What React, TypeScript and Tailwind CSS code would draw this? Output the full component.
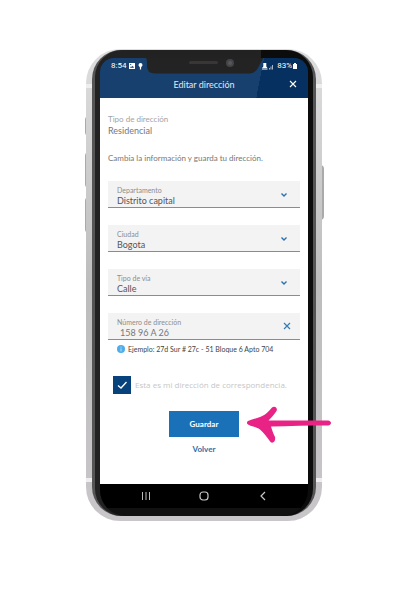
import type { ReactNode } from 'react';

function Chevron() {
  return (
    <svg className="pointer-events-none absolute right-3 top-2.5 h-2 w-2" viewBox="0 0 8 8" fill="none" stroke="#2a72b0" strokeWidth="1.4" aria-hidden="true">
      <path d="M1.5 2.5 4 5l2.500-2.500" />
    </svg>
  );
}

function Field({ id, label, children }: { id: string; label: string; children: ReactNode }) {
  return (
    <div className="relative h-[27px] border-b border-[#8c8c8c] bg-[#f3f3f3] px-2 pt-1">
      <label htmlFor={id} className="block pl-px text-[7px] leading-[10px] text-[#8d8d8d]">{label}</label>
      {children}
    </div>
  );
}

function SelectField({ id, label, value }: { id: string; label: string; value: string }) {
  return (
    <Field id={id} label={label}>
      <select id={id} defaultValue={value} className="block h-3 w-full appearance-none bg-transparent py-0 pl-px pr-0 text-[9px] leading-3 text-[#555] outline-none">
        <option>{value}</option>
      </select>
      <Chevron />
    </Field>
  );
}

function StatusBar() {
  return (
    <div className="flex h-4 items-center justify-between pl-[11px] pr-2.5 font-['Roboto',sans-serif] text-[8px] leading-3 text-white">
      <span className="flex items-center gap-[3px]">
        8:54
        <svg className="h-2 w-4" viewBox="0 0 16 8" fill="white" aria-hidden="true">
          <path fillRule="evenodd" d="M0 1h6v6H0zM1 5.800h4L3.700 3.800 2.700 5 2 4.300zM1.200 2v1h1V2z" />
          <path d="M9.500 3a2 2 0 1 1 4 0c0 1-1 1.500-1.400 2.400V7.500h-1.200V5.400C10.500 4.500 9.500 4 9.500 3z" />
        </svg>
      </span>
      <span className="flex items-center">
        <svg className="mr-[3px] h-2 w-3" viewBox="0 0 12 8" fill="white" aria-hidden="true">
          <path d="M1.300 1h3v3.500L5.500 6H0l1.300-1.500zM0 6.500h5.500v1H0z" />
          <path d="M7 6h1v1.500H7zM8.500 4.500h1v3h-1zM10 3h1v4.500h-1z" opacity=".65" />
        </svg>
        83%
        <svg className="h-2 w-1.5" viewBox="0 0 6 8" fill="white" aria-hidden="true">
          <path d="M1 2h1V1h2v1h1v5H1z" />
        </svg>
      </span>
    </div>
  );
}

function Notch() {
  return (
    <svg className="absolute left-[46px] top-0 h-4 w-[120px]" viewBox="0 0 120 16" aria-hidden="true">
      <path d="M-1-1Q1 0 1 5V8Q1 15.500 9 15.500H104Q110 15 113 8L118-1Z" fill="#232323" />
      <rect x="43" y="3" width="29" height="3" rx="1.500" fill="#3a3636" />
      <circle cx="84" cy="5" r="4" fill="#464448" />
      <circle cx="84" cy="5" r="2" fill="#59575b" />
    </svg>
  );
}

function AddressForm() {
  return (
    <form className="flex h-[386px] flex-col bg-white px-2 pt-4" onSubmit={(e) => e.preventDefault()}>
      <p className="text-[8px] leading-[11px] text-[#a3a3a3]">Tipo de dirección</p>
      <p className="text-[9px] leading-[11px] text-[#777]">Residencial</p>
      <p className="mt-[17px] whitespace-nowrap text-[8px] leading-[11px] text-[#777]">Cambia la información y guarda tu dirección.</p>
      <div className="mt-[17px] flex flex-col gap-[17px]">
        <SelectField id="departamento" label="Departamento" value="Distrito capital" />
        <SelectField id="ciudad" label="Ciudad" value="Bogota" />
        <SelectField id="via" label="Tipo de vía" value="Calle" />
        <Field id="numero" label="Número de dirección">
          <input id="numero" defaultValue="158 96 A 26" className="block h-3 w-full bg-transparent pl-1 text-[9px] leading-3 text-[#777] outline-none" />
          <button type="button" aria-label="Borrar" className="absolute right-2 top-2 flex h-2.5 w-2.5 items-center justify-center">
            <svg className="h-2 w-2" viewBox="0 0 8 8" stroke="#377bb5" strokeWidth="1.200" aria-hidden="true"><path d="m1 1 6 6M7 1 1 7" /></svg>
          </button>
        </Field>
      </div>
      <p className="mt-1 flex items-center gap-[3px] whitespace-nowrap pl-[9px] text-[7px] leading-[10px] text-[#444]">
        <svg className="h-2 w-2" viewBox="0 0 8 8" aria-hidden="true">
          <circle cx="4" cy="4" r="4" fill="#4fadea" />
          <path d="M4 1.600v1M4 3.400v3" stroke="#c2e6fc" strokeWidth=".9" />
        </svg>
        Ejemplo: 27d Sur # 27c - 51 Bloque 6 Apto 704
      </p>
      <label className="mt-[22px] flex items-center gap-1 whitespace-nowrap pl-[5px] font-['Open_Sans',sans-serif] text-[8px] leading-[18px] text-[#c6c6c6]">
        <span className="relative h-[18px] w-[18px]">
          <input type="checkbox" defaultChecked className="peer block h-[18px] w-[18px] appearance-none bg-[#07427d]" />
          <svg className="pointer-events-none absolute inset-0 hidden peer-checked:block" viewBox="0 0 18 18" fill="none" stroke="white" strokeWidth="1.300" aria-hidden="true"><path d="m5 9.500 3 2.500 5.500-6" /></svg>
        </span>
        Esta es mi dirección de correspondencia.
      </label>
      <div className="mt-[17px] flex flex-col items-center gap-1.5">
        <button type="submit" className="h-[26px] w-[70px] bg-[#1b71b8] pb-px text-[8px] font-bold leading-3 text-white">Guardar</button>
        <button type="button" className="text-[8px] font-bold leading-3 text-[#2d6ea6]">Volver</button>
      </div>
    </form>
  );
}

function Phone() {
  return (
    <div className="relative">
      <i className="absolute -left-px top-[67px] h-5 w-1 rounded-l-sm bg-[#aaa]" />
      <i className="absolute -left-px top-[103px] h-9 w-1 rounded-l-sm bg-[#aaa]" />
      <i className="absolute -left-px top-[148px] h-9 w-1 rounded-l-sm bg-[#aaa]" />
      <i className="absolute -right-0.5 top-[116px] h-[55px] w-1 rounded-r-sm bg-[#aaa]" />
      <div className="relative rounded-[34px] bg-linear-to-b from-[#dedede] via-[#bdbdbd] to-[#c9c6c9] px-1.5 pb-[5px] pt-px">
        <i className="absolute left-0 top-[35px] h-1 w-1.5 bg-[#eee]" />
        <i className="absolute right-0 top-[35px] h-1 w-1.5 bg-[#eee]" />
        <i className="absolute bottom-[39px] left-0 h-1 w-1.5 bg-[#eee]" />
        <i className="absolute bottom-[39px] right-0 h-1 w-1.5 bg-[#eee]" />
        <div className="rounded-[29px] bg-[#555] px-[3px]">
          <div className="rounded-[27px] bg-[linear-gradient(90deg,#222_76%,#0c0c0c_76%)] px-[5px] pt-2">
            <div className="relative overflow-hidden rounded-t-[14px] rounded-b-[26px] bg-[#111] pb-2">
              <header className="bg-[linear-gradient(101deg,#17406f_76%,#06305f_76%)] text-white">
                <StatusBar />
                <div className="relative flex h-6 items-center justify-center pb-[3px]">
                  <h1 className="text-[9px] leading-3 text-[#e1e8f0]">Editar dirección</h1>
                  <button type="button" aria-label="Cerrar" className="absolute right-2.5 top-[5px] flex h-2.5 w-2.5 items-center justify-center">
                    <svg className="h-2 w-2" viewBox="0 0 8 8" stroke="white" strokeWidth="1.100" aria-hidden="true"><path d="m1 1 6 6M7 1 1 7" /></svg>
                  </button>
                </div>
              </header>
              <Notch />
              <AddressForm />
              <nav className="flex h-6 items-center justify-between bg-black px-10">
                <button type="button" aria-label="Recientes"><svg className="h-3 w-3" viewBox="0 0 12 12" stroke="#bbb"><path d="M2.500 2v8M6 2v8M9.500 2v8" /></svg></button>
                <button type="button" aria-label="Inicio"><svg className="h-3 w-3" viewBox="0 0 12 12" fill="none" stroke="#c8c8c8" strokeWidth="1.200"><rect x="2" y="2" width="8" height="8" rx="3" /></svg></button>
                <button type="button" aria-label="Atrás"><svg className="h-3 w-3" viewBox="0 0 12 12" fill="none" stroke="#c8c8c8" strokeWidth="1.200"><path d="M9 2 5 6l4 4" /></svg></button>
              </nav>
            </div>
          </div>
        </div>
      </div>
      <svg className="absolute -right-[9px] top-[356px] h-10 w-[86px]" viewBox="0 0 86 40" fill="#e92286" aria-hidden="true">
        <path d="M3 16C9 14 16 12 20 9.500C23 7.500 25 4.500 27 2.500C30 .5 33 3.500 31.500 6C29 10 26 13 23.500 15.500L83 15.500C87 16 87 20 83 20.500C64 20.500 44 21 26 21.500C27 25 28 28 30 32C31 36 28 39 25.500 37C22 32 19 28 15 24.500C12 22 7 21.500 4 20C1.500 19 1.500 17 3 16Z" />
      </svg>
    </div>
  );
}

export default function App() {
  return (
    <main className="min-h-screen bg-white pb-[73px] pl-[86px] pr-[98px] pt-[49px] font-['Lato','Open_Sans',sans-serif]">
      <Phone />
    </main>
  );
}
